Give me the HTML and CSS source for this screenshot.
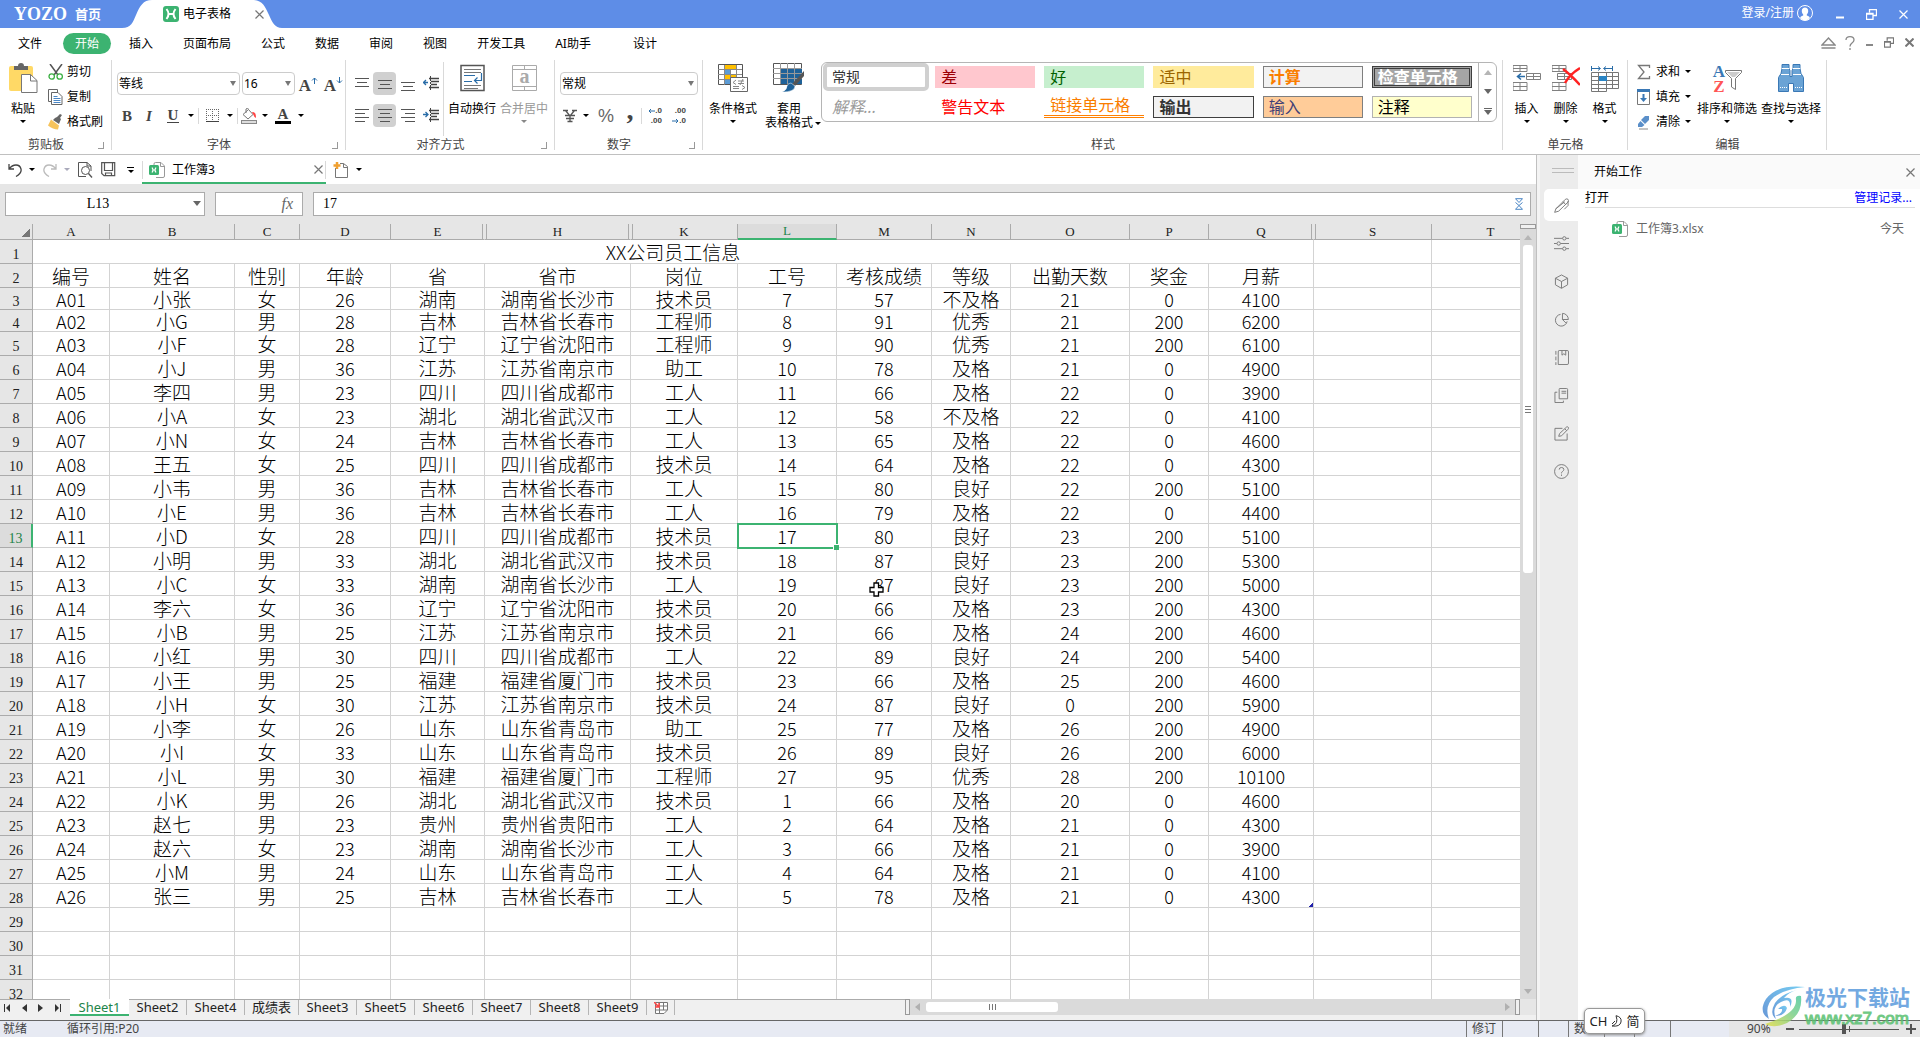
FILE: index.html
```html
<!DOCTYPE html>
<html lang="zh-CN">
<head>
<meta charset="utf-8">
<title>工作簿3 - 电子表格</title>
<link rel="stylesheet" href="styles.css">
</head>
<body>
<svg class="defs" aria-hidden="true">
  <symbol id="x" viewBox="0 0 9 9"><path d="M.5.5l8 8M8.5.5l-8 8" fill="none" stroke="currentColor" stroke-width="1.2"/></symbol>
  <symbol id="restore" viewBox="0 0 11 11"><path d="M3.500 3.500v-3h7v6h-3M.5 4.500h6.500v6H.5zM.5 5.200h6.500" fill="none" stroke="currentColor" stroke-width="1.300"/></symbol>
  <symbol id="book" viewBox="0 0 16 16"><path d="M5 3V2q0-1.500 1.500-1.500H12L15.500 4v10q0 1.500-1.500 1.500H7" fill="#fff" stroke="#999"/><path d="M11.500.5V4.500h4" fill="none" stroke="#999"/><rect y="3" width="10" height="10" rx="1.500" fill="#3cb371"/><path d="M3 5.500q2 2.500 0 5M7 5.500q-2 2.500 0 5M3.500 8h3" fill="none" stroke="#fff" stroke-width="1.200"/></symbol>
  <symbol id="grid5" viewBox="0 0 28 26"><path d="M0 .5h14v6H0zM0 3.500h14M7 .5v6M0 17.500h14v8H0zM0 21.500h14M7 17.500v8M13.500 8.500h14v6h-14zM13.500 11.500h14M20.500 8.500v6" fill="none" stroke="#808080"/></symbol>
</svg>

<header class="titlebar">
  <a class="brand" href="#"><b>YOZO</b><span>首页</span></a>
  <div class="apptab">
    <svg class="apptab-bg" width="160" height="28" viewBox="0 0 160 28"><path d="M0 28C9 28 11 22 14 15C18 6 21 0 30 0H130C140 0 143 6 147 15C150 22 153 28 160 28Z" fill="#fff"/></svg>
    <svg width="16" height="16" viewBox="0 0 16 16"><rect width="16" height="16" rx="3" fill="#3cb371"/><path d="M3.500 3Q7.500 8 3.500 13M12.500 3Q8.500 8 12.500 13M5.500 8h5" fill="none" stroke="#fff" stroke-width="2"/></svg>
    <span>电子表格</span>
    <button class="ib close" aria-label="关闭"><svg width="9" height="9"><use href="#x"/></svg></button>
  </div>
  <div class="account">
    <a href="#">登录/注册</a>
    <svg width="16" height="16" viewBox="0 0 16 16"><circle cx="8" cy="8" r="7.500" fill="none" stroke="#fff"/><path d="M8 2.500c2 0 3.200 1.400 3.200 3.500 0 1.500-.6 2.700-1.400 3.400v1.200c2 .6 2.700 1.200 3 2C11.500 14.500 10 15.500 8 15.500s-3.500-1-4.800-2.900c.3-.8 1-1.400 3-2V9.400C5.400 8.700 4.800 7.500 4.800 6 4.800 3.900 6 2.500 8 2.500z" fill="#fff"/></svg>
  </div>
  <div class="winbtns">
    <button class="ib" aria-label="最小化"><svg width="8" height="11"><path d="M0 8.500h8" stroke="#fff" stroke-width="2"/></svg></button>
    <button class="ib" aria-label="还原"><svg width="11" height="11"><use href="#restore"/></svg></button>
    <button class="ib" aria-label="关闭窗口"><svg width="9" height="9"><use href="#x"/></svg></button>
  </div>
</header>

<nav class="menu">
  <button class="first">文件</button><button class="on">开始</button><button>插入</button><button>页面布局</button><button>公式</button><button>数据</button><button>审阅</button><button>视图</button><button>开发工具</button><button class="ai">AI助手</button><button>设计</button>
  <div class="winbtns sub">
    <button class="ib" aria-label="折叠功能区"><svg width="15" height="12" viewBox="0 0 15 12"><path d="M1 8L7.500 1 14 8zM.5 11h14" fill="none" stroke="#888" stroke-width="1.400"/></svg></button>
    <button class="ib q" aria-label="帮助"><svg width="10" height="14" viewBox="0 0 10 14"><path d="M1 4Q1 .7 5 .7T9 4Q9 5.500 7 7T5 10.500M5 12v2" fill="none" stroke="#888" stroke-width="1.300"/></svg></button>
    <button class="ib" aria-label="最小化文档"><svg width="7" height="11"><path d="M0 8h7" stroke="#888" stroke-width="2"/></svg></button>
    <button class="ib" aria-label="还原文档"><svg width="10" height="11"><use href="#restore"/></svg></button>
    <button class="ib" aria-label="关闭文档"><svg width="9" height="9" viewBox="0 0 9 9"><path d="M.5.5l8 8M8.500.5l-8 8" stroke="#777" stroke-width="2"/></svg></button>
  </div>
</nav>

<section class="ribbon">
  <div class="group g1">
    <div class="body">
      <button class="big w46"><svg width="30" height="30" viewBox="0 0 30 30"><rect x="1" y="3" width="24" height="25" rx="2" fill="#ffd966"/><path d="M6 3h4q0-3 3-3t3 3h4v4H6z" fill="#666"/><path d="M13.500 11.500h9l6.500 6v12H13.500z" fill="#fff" stroke="#777"/><path d="M22.500 11.500v6.500H29" fill="none" stroke="#777"/></svg><span>粘贴</span><i class="arr"></i></button>
      <div class="stack">
        <button><svg width="16" height="16" viewBox="0 0 16 16"><path d="M2 0l8 11M14 0L6 11" stroke="#555" stroke-width="1.500" fill="none"/><circle cx="3.700" cy="12.500" r="2.700" fill="none" stroke="#3cb043" stroke-width="1.300"/><circle cx="11.700" cy="12.500" r="2.700" fill="none" stroke="#3cb043" stroke-width="1.300"/></svg>剪切</button>
        <button><svg width="16" height="16" viewBox="0 0 16 16"><path d="M3 12.500H.5v-12h9V3" fill="none" stroke="#666"/><path d="M3.500 3.500H10l4 4v8H3.500z" fill="#fff" stroke="#666"/><path d="M5.500 7.500h4M5.500 9.500h7M5.500 11.500h7M5.500 13.500h7" stroke="#4a86c5"/></svg>复制</button>
        <button><svg width="16" height="16" viewBox="0 0 16 16"><path d="M7 4l2-1 3-3 2 1-2 3 1 1-2 5-6-4z" fill="#666"/><path d="M3 5.500l8 6-1 4q-5 0-10-4z" fill="#f6c35b"/></svg>格式刷</button>
      </div>
    </div>
    <div class="cap"><span>剪贴板</span><button class="lch" aria-label="剪贴板设置"></button></div>
  </div>

  <div class="group g2">
    <div class="body rows">
      <div class="row">
        <label class="sel w123"><select aria-label="字体"><option>等线</option></select></label>
        <label class="sel w53"><select aria-label="字号"><option>16</option></select></label>
        <button class="t w23" aria-label="增大字号"><b class="serif a">A</b><svg width="7" height="7" viewBox="0 0 7 7"><path d="M3.500 7V1M1 3.500L3.500 1 6 3.500" fill="none" stroke="#2a6da8"/></svg></button>
        <button class="t w23" aria-label="减小字号"><b class="serif a">A</b><svg width="7" height="7" viewBox="0 0 7 7"><path d="M3.500 0v6M1 3.500L3.500 6 6 3.500" fill="none" stroke="#2a6da8"/></svg></button>
      </div>
      <div class="row r2">
        <button class="t w20 serif"><b>B</b></button><button class="t w24 serif"><b><em>I</em></b></button><button class="t w24 serif"><b class="u">U</b></button><button class="t w12"><i class="arr"></i></button>
        <i class="vs"></i>
        <button class="t w24"><svg width="13" height="13" viewBox="0 0 13 13"><path d="M.5 0v12M6.500 0v12M12.500 0v12M0 .5h13M0 6.500h13" stroke="#666" stroke-dasharray="1 1" fill="none"/><path d="M0 12.500h13" stroke="#444"/></svg></button><button class="t w12"><i class="arr"></i></button>
        <i class="vs"></i>
        <button class="t w20"><svg width="17" height="16" viewBox="0 0 17 16"><path d="M2 6.500L7.500 1.500 12 6.500 7 11zM5 5V1q2-2 2.500.5" fill="#fff" stroke="#777"/><path d="M11 4q4-1 4 6-2-1-3-4z" fill="#f44"/><rect x=".5" y="12.500" width="15" height="3" fill="#ddd" stroke="#888"/></svg></button><button class="t w12"><i class="arr"></i></button>
        <button class="t w24 serif"><b class="fc">A</b></button><button class="t w12"><i class="arr"></i></button>
      </div>
    </div>
    <div class="cap"><span>字体</span><button class="lch" aria-label="字体设置"></button></div>
  </div>

  <div class="group g3">
    <div class="body">
      <div class="rows al">
        <div class="row">
          <button class="t w23"><svg width="14" height="14"><path d="M0 1.500h14M2 5.500h10M0 9.500h14" class="ln"/></svg></button><button class="t w23 act"><svg width="14" height="14"><path d="M0 3.500h14M2 7.500h10M0 11.500h14" class="ln"/></svg></button><button class="t w23"><svg width="14" height="14"><path d="M0 5.500h14M2 9.500h10M0 13.500h14" class="ln"/></svg></button><button class="t w23"><svg width="16" height="15" viewBox="0 0 16 15"><path d="M5 6.500H.5M3 4L.5 6.500 3 9" stroke="#2a6da8" fill="none" stroke-width="1.300"/><path d="M6 2.500h10M8 5.500h8M8 8.500h6M6 11.500h10" stroke="#444" fill="none" stroke-width="1.400"/><path d="M7.500 0v15" stroke="#444" stroke-dasharray="2 1"/></svg></button>
        </div>
        <div class="row r2">
          <button class="t w23"><svg width="14" height="14"><path d="M0 .5h14M0 4.500h10M0 8.500h14M0 12.500h10" class="ln"/></svg></button><button class="t w23 act"><svg width="14" height="14"><path d="M0 .5h14M2 4.500h10M0 8.500h14M2 12.500h10" class="ln"/></svg></button><button class="t w23"><svg width="14" height="14"><path d="M0 .5h14M4 4.500h10M0 8.500h14M4 12.500h10" class="ln"/></svg></button><button class="t w23"><svg width="16" height="15" viewBox="0 0 16 15"><path d="M0 6.500H4.500M2.500 4L5 6.500 2.500 9" stroke="#2a6da8" fill="none" stroke-width="1.300"/><path d="M6 2.500h10M8 5.500h8M8 8.500h6M6 11.500h10" stroke="#444" fill="none" stroke-width="1.400"/><path d="M7.500 0v15" stroke="#444" stroke-dasharray="2 1"/></svg></button>
        </div>
      </div>
      <i class="vs tall"></i>
      <button class="big w50"><svg width="25" height="30" viewBox="0 0 25 30"><path d="M1 2.500h23v25H1z" fill="#fff" stroke="#555" stroke-width="1.500"/><path d="M4 6.500h17M4 9.500h17M4 22.500h17M4 25.500h14" stroke="#777"/><path d="M4 12.500h11M4 18.500h8M21.500 10v7.500H15M17.500 14.500l-3 3 3 3" stroke="#2a6da8" fill="none" stroke-width="1.200"/></svg><span>自动换行</span></button>
      <button class="big w54 dis" disabled><svg width="25" height="30" viewBox="0 0 25 30"><path d="M.5 2.500h24v25H.5zM.5 6.500h24M.5 23.500h24M12.500 2v4M12.500 24v4" fill="none" stroke="#aaa"/><text x="12.500" y="20" text-anchor="middle" class="svga">a</text></svg><span>合并居中</span><i class="arr"></i></button>
    </div>
    <div class="cap"><span>对齐方式</span><button class="lch" aria-label="对齐设置"></button></div>
  </div>

  <div class="group g4">
    <div class="body rows">
      <div class="row"><label class="sel w138"><select aria-label="数字格式"><option>常规</option></select></label></div>
      <div class="row r2">
        <button class="t w20" aria-label="货币"><svg width="14" height="14" viewBox="0 0 14 14"><path d="M0 1.500h5M9 1.500h5M2.500 1.500L7 7l4.500-5.500M2 6.500h10M3 9.500h8M7 6.500v6M4.500 12.500h5" fill="none" stroke="#555" stroke-width="1.300"/></svg></button><button class="t w12"><i class="arr"></i></button>
        <button class="t w28 pct">%</button><button class="t w20 serif com"><b>,</b></button>
        <i class="vs"></i>
        <button class="t w24" aria-label="增加小数位"><span class="dec"><span><svg width="7" height="6"><path d="M7 3H1M3 1L1 3l2 2" stroke="#2a6da8" fill="none"/></svg>.0</span><span>.00</span></span></button><button class="t w24" aria-label="减少小数位"><span class="dec"><span>.00</span><span><svg width="7" height="6"><path d="M0 3h6M4 1l2 2-2 2" stroke="#2a6da8" fill="none"/></svg>.0</span></span></button>
      </div>
    </div>
    <div class="cap"><span>数字</span><button class="lch" aria-label="数字设置"></button></div>
  </div>

  <div class="group g5">
    <div class="body">
      <button class="big w56"><svg width="30" height="30" viewBox="0 0 30 30"><path d="M.5 1.500h24v20H.5z" fill="#fff" stroke="#555"/><path d="M7 2h11v4H7zM7 11h11v5H7z" fill="#ffc000"/><path d="M7 7h5v4H7zM7 17h5v4H7z" fill="#5b9bd5"/><path d="M6.500 2v20M12.500 6v15M18.500 2v20M0 6.500h24M0 11.500h24M0 16.500h24" stroke="#888" fill="none"/><path d="M12.500 14.500h17v14h-17z" fill="#fff" stroke="#666"/><path d="M18 17l-3 2.500 3 2M20 18h6M20 20.500h6M25 16l-3 6M24 22.500l3 2-3 2M15 23.500h6M15 25.500h6" stroke="#888" fill="none"/></svg><span>条件格式</span><i class="arr"></i></button>
      <button class="big w56"><svg width="32" height="30" viewBox="0 0 32 30"><path d="M.5.500h28v21H.5z" fill="#fff" stroke="#555"/><path d="M8 6h21v15H8z" fill="#1f6299"/><path d="M7.500 0v21M14.500 0v21M21.500 0v21M0 5.500h29M0 10.500h29M0 15.500h29" stroke="#999" fill="none"/><path d="M31 8v5L22 23l-3-2z" fill="#555"/><path d="M18 20l4 3q0 6-13 6 5-2 5-6 1-3 4-3z" fill="#1f6299" stroke="#fff" stroke-width=".5"/></svg><span>套用</span><span class="l2">表格格式<i class="arr"></i></span></button>
      <div class="gallery">
        <div class="cells">
          <button class="c normal">常规</button><button class="c bad">差</button><button class="c good">好</button><button class="c mid">适中</button><button class="c calc">计算</button><button class="c check">检查单元格</button>
          <button class="c expl">解释...</button><button class="c warn">警告文本</button><button class="c link">链接单元格</button><button class="c outp">输出</button><button class="c inp">输入</button><button class="c note">注释</button>
        </div>
        <div class="gscroll"><button aria-label="上一行"><i class="tri up"></i></button><button aria-label="下一行"><i class="tri"></i></button><button aria-label="更多样式"><i class="bar"></i><i class="tri"></i></button></div>
      </div>
    </div>
    <div class="cap"><span>样式</span></div>
  </div>

  <div class="group g6">
    <div class="body">
      <button class="big w39"><svg width="28" height="30" viewBox="0 -2 28 30"><use href="#grid5" width="28" height="26"/><path d="M12 11.500H5M8 8.500l-3.500 3L8 14.500" fill="none" stroke="#2a6da8" stroke-width="1.500"/></svg><span>插入</span><i class="arr"></i></button>
      <button class="big w39"><svg width="28" height="30" viewBox="0 -2 28 30"><path d="M0 .5h14v6H0zM0 3.500h14M7 .5v6M0 17.500h14v8H0zM0 21.500h14M7 17.500v8M5.500 8.500h14v6h-14zM5.500 11.500h14M12.500 8.500v6" fill="none" stroke="#808080"/><path d="M11 4q8 6 17 16M28 3q-10 6-15 15" fill="none" stroke="#f22" stroke-width="2.500"/></svg><span>删除</span><i class="arr"></i></button>
      <button class="big w39"><svg width="28" height="30" viewBox="0 -2 28 30"><path d="M.5 7.500h27v16h-12v3H.5zM0 11.500h28M0 15.500h28M0 19.500h28M0 23.500h16M7.500 8v18M15.500 8v16M21.500 8v16" fill="none" stroke="#777"/><path d="M8 11h8v5H8z" fill="#2a85c5"/><path d="M.5 1v5M21.500 1v5M1 3.500h8M13 3.500h8M7 1.500l2.500 2L7 5.500M15 1.500l-2.500 2 2.500 2" fill="none" stroke="#2a6da8"/></svg><span>格式</span><i class="arr"></i></button>
    </div>
    <div class="cap"><span>单元格</span></div>
  </div>

  <div class="group g7">
    <div class="body">
      <div class="stack ed">
        <button><svg width="16" height="16" viewBox="0 0 16 16"><path d="M13.500 4V1.500H2.500L8 8l-5.500 6.500h11V12" fill="none" stroke="#777" stroke-width="1.300"/></svg>求和<i class="arr"></i></button>
        <button><svg width="16" height="16" viewBox="0 0 16 16"><path d="M1.500 1.500h12v14h-12z" fill="#fff" stroke="#777"/><path d="M1 0h13v3H1zM6.500 5h2v4h2.500L7.500 13 4 9h2.500z" fill="#3a78b5"/></svg>填充<i class="arr"></i></button>
        <button><svg width="16" height="16" viewBox="0 0 16 16"><path d="M9 2h4v4L9 10 5 6zM4.500 7l4 4-2.500 2H2V10z" fill="#5b8fc9"/><path d="M3 15h9" stroke="#888"/></svg>清除<i class="arr"></i></button>
      </div>
      <button class="big w64"><svg width="30" height="30" viewBox="0 0 30 30"><text x="7" y="14" text-anchor="middle" class="svgl bl">A</text><text x="7" y="29" text-anchor="middle" class="svgl rd">Z</text><path d="M13.500 7.500h16v2l-6 6v11l-4-2.500v-8.500l-6-6z" fill="#fff" stroke="#777"/><path d="M15 9h13l-5 5h-3z" fill="#ccc"/></svg><span>排序和筛选</span><i class="arr"></i></button>
      <button class="big w64"><svg width="26" height="30" viewBox="0 0 26 30"><path d="M4 1.500h7v4l1 2v6h2v-6l1-2v-4h7v4l1 5 2.500 4v14h-10v-8h-5v8H.5v-14l2.500-4 1-5z" fill="#6aa3d5" stroke="#3a78b5"/><path d="M4 5.500h7M15 5.500h7M3 11.500h8M15 11.500h8" stroke="#fff"/><path d="M2 24.500h7M17 24.500h7" stroke="#fff" stroke-dasharray="1 1"/></svg><span>查找与选择</span><i class="arr"></i></button>
    </div>
    <div class="cap"><span>编辑</span></div>
  </div>
</section>

<main class="work">
  <section class="doc">
    <div class="quick">
      <button class="ib" aria-label="撤销"><svg width="14" height="14" viewBox="0 0 14 14"><path d="M1 1v5h5M1 6q3-4 7-4t5 4-5 7.500" fill="none" stroke="#444" stroke-width="1.300"/></svg></button><i class="arr"></i>
      <button class="ib redo" aria-label="恢复"><svg width="14" height="14" viewBox="0 0 14 14"><path d="M13 1v5H8M13 6q-3-4-7-4T1 6t5 7.500" fill="none" stroke="#bbb" stroke-width="1.300"/></svg></button><i class="arr lt"></i>
      <button class="ib pv" aria-label="打印预览"><svg width="15" height="16" viewBox="0 0 15 16"><path d="M8 14.500H.5V.5H9L13 4v5M9 .5V4h4" fill="none" stroke="#555"/><circle cx="7.500" cy="8.500" r="4" fill="#fff" stroke="#555"/><path d="M10.500 11.500l3.500 4" stroke="#555" stroke-width="1.300"/></svg></button>
      <button class="ib sv" aria-label="保存"><svg width="15" height="15" viewBox="0 0 15 15"><path d="M.7.700h13v13H3L.7 11.500zM3.500 1v7.500h8V1M4.500 14v-3h6v3" fill="none" stroke="#555" stroke-width="1.200"/></svg></button>
      <button class="ib mr" aria-label="更多"><i class="bar k"></i><i class="arr"></i></button>
      <div class="dtab"><svg width="16" height="16"><use href="#book"/></svg><span>工作簿3</span><button class="ib" aria-label="关闭工作簿"><svg width="9" height="9"><use href="#x"/></svg></button></div>
      <button class="ib nw" aria-label="新建"><svg width="16" height="16" viewBox="0 0 16 16"><path d="M2.500 6v9.500h12v-11l-4-3H7M10.500 1.500v4h4" fill="none" stroke="#777"/><path d="M4 0v7M.5 3.500h7" stroke="#f0a030" stroke-width="2.500"/></svg></button><i class="arr"></i>
    </div>
    <div class="fbar">
      <label class="sel name"><input type="text" value="L13" aria-label="名称框"></label>
      <button class="fx" aria-label="插入函数"><em>fx</em></button>
      <div class="formula"><input type="text" value="17" aria-label="编辑栏"><button class="ib" aria-label="展开"><svg width="8" height="12" viewBox="0 0 8 12"><path d="M.5.7h7L4 4.500zM.5 11.300h7L4 7.500zM.5 4.500L4 7.500 7.500 4.500" fill="none" stroke="#4a86c5"/></svg></button></div>
    </div>
    <div class="sheetarea">
      <div class="gridbox">
        <table>
          <colgroup><col class="k33"><col class="k77"><col class="k125"><col class="k65"><col class="k91"><col class="k94"><col class="k146"><col class="k107"><col class="k99"><col class="k95"><col class="k79"><col class="k119"><col class="k79"><col class="k105"><col class="k118"><col class="k118"></colgroup>
          <thead><tr><th class="corner"><th>A<th>B<th>C<th>D<th class="gr">E<th class="gl gr">H<th class="gl">K<th class="cur">L<th>M<th>N<th>O<th>P<th class="gr">Q<th class="gl">S<th>T</thead>
          <tbody>
          <tr><th>1<td colspan="13">XX公司员工信息<td><td>
          <tr><th>2<td>编号<td>姓名<td>性别<td>年龄<td>省<td>省市<td>岗位<td>工号<td>考核成绩<td>等级<td>出勤天数<td>奖金<td>月薪<td><td>
          <tr class="lo"><th>3<td>A01<td>小张<td>女<td>26<td>湖南<td>湖南省长沙市<td>技术员<td>7<td>57<td>不及格<td>21<td>0<td>4100<td><td>
          <tr class="lo"><th>4<td>A02<td>小G<td>男<td>28<td>吉林<td>吉林省长春市<td>工程师<td>8<td>91<td>优秀<td>21<td>200<td>6200<td><td>
          <tr><th>5<td>A03<td>小F<td>女<td>28<td>辽宁<td>辽宁省沈阳市<td>工程师<td>9<td>90<td>优秀<td>21<td>200<td>6100<td><td>
          <tr><th>6<td>A04<td>小J<td>男<td>36<td>江苏<td>江苏省南京市<td>助工<td>10<td>78<td>及格<td>21<td>0<td>4900<td><td>
          <tr><th>7<td>A05<td>李四<td>男<td>23<td>四川<td>四川省成都市<td>工人<td>11<td>66<td>及格<td>22<td>0<td>3900<td><td>
          <tr><th>8<td>A06<td>小A<td>女<td>23<td>湖北<td>湖北省武汉市<td>工人<td>12<td>58<td>不及格<td>22<td>0<td>4100<td><td>
          <tr><th>9<td>A07<td>小N<td>女<td>24<td>吉林<td>吉林省长春市<td>工人<td>13<td>65<td>及格<td>22<td>0<td>4600<td><td>
          <tr><th>10<td>A08<td>王五<td>女<td>25<td>四川<td>四川省成都市<td>技术员<td>14<td>64<td>及格<td>22<td>0<td>4300<td><td>
          <tr><th>11<td>A09<td>小韦<td>男<td>36<td>吉林<td>吉林省长春市<td>工人<td>15<td>80<td>良好<td>22<td>200<td>5100<td><td>
          <tr><th>12<td>A10<td>小E<td>男<td>36<td>吉林<td>吉林省长春市<td>工人<td>16<td>79<td>及格<td>22<td>0<td>4400<td><td>
          <tr class="currow"><th>13<td>A11<td>小D<td>女<td>28<td>四川<td>四川省成都市<td>技术员<td class="active">17<td>80<td>良好<td>23<td>200<td>5100<td><td>
          <tr><th>14<td>A12<td>小明<td>男<td>33<td>湖北<td>湖北省武汉市<td>技术员<td>18<td>87<td>良好<td>23<td>200<td>5300<td><td>
          <tr><th>15<td>A13<td>小C<td>女<td>33<td>湖南<td>湖南省长沙市<td>工人<td>19<td class="hover">87<svg class="cursor" width="15" height="15" viewBox="0 0 15 15"><path d="M5 1h4.500v4.500H14V10H9.500v4H5v-4H1V5.500h4z" fill="#fff" stroke="#000" stroke-width="1.300"/></svg><td>良好<td>23<td>200<td>5000<td><td>
          <tr><th>16<td>A14<td>李六<td>女<td>36<td>辽宁<td>辽宁省沈阳市<td>技术员<td>20<td>66<td>及格<td>23<td>200<td>4300<td><td>
          <tr><th>17<td>A15<td>小B<td>男<td>25<td>江苏<td>江苏省南京市<td>技术员<td>21<td>66<td>及格<td>24<td>200<td>4600<td><td>
          <tr><th>18<td>A16<td>小红<td>男<td>30<td>四川<td>四川省成都市<td>工人<td>22<td>89<td>良好<td>24<td>200<td>5400<td><td>
          <tr><th>19<td>A17<td>小王<td>男<td>25<td>福建<td>福建省厦门市<td>技术员<td>23<td>66<td>及格<td>25<td>200<td>4600<td><td>
          <tr><th>20<td>A18<td>小H<td>女<td>30<td>江苏<td>江苏省南京市<td>技术员<td>24<td>87<td>良好<td>0<td>200<td>5900<td><td>
          <tr><th>21<td>A19<td>小李<td>女<td>26<td>山东<td>山东省青岛市<td>助工<td>25<td>77<td>及格<td>26<td>200<td>4900<td><td>
          <tr><th>22<td>A20<td>小I<td>女<td>33<td>山东<td>山东省青岛市<td>技术员<td>26<td>89<td>良好<td>26<td>200<td>6000<td><td>
          <tr><th>23<td>A21<td>小L<td>男<td>30<td>福建<td>福建省厦门市<td>工程师<td>27<td>95<td>优秀<td>28<td>200<td>10100<td><td>
          <tr><th>24<td>A22<td>小K<td>男<td>26<td>湖北<td>湖北省武汉市<td>技术员<td>1<td>66<td>及格<td>20<td>0<td>4600<td><td>
          <tr><th>25<td>A23<td>赵七<td>男<td>23<td>贵州<td>贵州省贵阳市<td>工人<td>2<td>64<td>及格<td>21<td>0<td>4300<td><td>
          <tr><th>26<td>A24<td>赵六<td>女<td>23<td>湖南<td>湖南省长沙市<td>工人<td>3<td>66<td>及格<td>21<td>0<td>3900<td><td>
          <tr><th>27<td>A25<td>小M<td>男<td>24<td>山东<td>山东省青岛市<td>工人<td>4<td>64<td>及格<td>21<td>0<td>4100<td><td>
          <tr><th>28<td>A26<td>张三<td>男<td>25<td>吉林<td>吉林省长春市<td>工人<td>5<td>78<td>及格<td>21<td>0<td class="tail">4300<td><td>
          <tr><th>29<td><td><td><td><td><td><td><td><td><td><td><td><td><td><td><td>
          <tr><th>30<td><td><td><td><td><td><td><td><td><td><td><td><td><td><td><td>
          <tr><th>31<td><td><td><td><td><td><td><td><td><td><td><td><td><td><td><td>
          <tr><th>32<td><td><td><td><td><td><td><td><td><td><td><td><td><td><td><td>
          </tbody>
        </table>
      </div>
      <div class="vscroll"><i class="split"></i><i class="tri up"></i><div class="thumb"><i></i><i></i><i></i></div><i class="space"></i><i class="tri lt"></i></div>
    </div>
    <div class="tabs">
      <div class="nav"><button aria-label="第一张"><svg width="7" height="8"><path d="M.5 0v8" stroke="#333"/><path d="M6 0v8L2 4z" fill="#333"/></svg></button><button aria-label="上一张"><svg width="5" height="8"><path d="M5 0v8L0 4z" fill="#333"/></svg></button><button aria-label="下一张"><svg width="5" height="8"><path d="M0 0v8l5-4z" fill="#333"/></svg></button><button aria-label="最后一张"><svg width="7" height="8"><path d="M6.500 0v8" stroke="#333"/><path d="M1 0v8l4-4z" fill="#333"/></svg></button></div>
      <div class="list"><button class="on">Sheet1</button><button>Sheet2</button><button>Sheet4</button><button>成绩表</button><button>Sheet3</button><button>Sheet5</button><button>Sheet6</button><button>Sheet7</button><button>Sheet8</button><button>Sheet9</button><button class="add" aria-label="新建工作表"><svg width="14" height="12" viewBox="0 0 14 12"><path d="M1.500.5h12V8L10 11.500H1.500zM2 4h11M2 8h11M5.500 0v11M9.500 0v8" fill="#fff" stroke="#777"/><path d="M0 0l4.500 4.500M5 1v4H1" stroke="#f44" stroke-width="1.500" fill="none"/></svg></button></div>
      <div class="hscroll"><i class="split"></i><i class="side l"></i><div class="hthumb"><i></i><i></i><i></i></div><i class="space"></i><i class="side r"></i><i class="split"></i><i class="end"></i></div>
    </div>
  </section>

  <aside class="dock">
    <div class="rail">
      <i class="grip"></i>
      <button class="on" aria-label="开始工作"><svg viewBox="0 0 16 16"><path d="M.7 15.300L2 11.500 12 1.500q1.800-1.200 3 0t0 2.800L5 14zM9.500 4l3 3M15 3v5l-4 4M2 11.500L11.500 4" fill="none" stroke="#777"/></svg></button>
      <button aria-label="属性"><svg viewBox="0 0 16 16"><path d="M0 2.500h9M13 2.500h3M0 8h3M7 8h9M0 13.500h9M13 13.500h3" stroke="#777"/><circle cx="11" cy="2.500" r="1.800" fill="none" stroke="#777"/><circle cx="5" cy="8" r="1.800" fill="none" stroke="#777"/><circle cx="11" cy="13.500" r="1.800" fill="none" stroke="#777"/></svg></button>
      <button aria-label="对象"><svg viewBox="0 0 16 16"><path d="M8 1l6.500 3.500v7L8 15.300 1.500 11.500v-7zM1.500 4.500L8 8l6.500-3.500M8 8v7" fill="none" stroke="#777"/></svg></button>
      <button aria-label="图表"><svg viewBox="0 0 16 16"><path d="M7 2.500A6.300 6.300 0 1 0 14 10M9 1.500V8h6.300A6.300 6.300 0 0 0 9 1.500zM9 8l4 4" fill="none" stroke="#777"/></svg></button>
      <button aria-label="书签"><svg viewBox="0 0 16 16"><path d="M5.500.5H14Q15.500.5 15.500 2v12q0 1.500-1.500 1.500H4.500V2Q4.500.5 5.500.5zM8.500.5v5l2-1.500 2 1.500v-5" fill="none" stroke="#777"/><path d="M2 1v15" stroke="#777" stroke-dasharray="4 2"/></svg></button>
      <button aria-label="剪贴板"><svg viewBox="0 0 16 16"><path d="M6 .500h7.500Q14.500.5 14.500 1.500v10H5.500v-10Q5.500.5 6 .5zM8 3.500h5M8 5.500h5M3.500 4.500H1v11h9V13.500" fill="none" stroke="#777"/></svg></button>
      <button aria-label="批注"><svg viewBox="0 0 16 16"><path d="M9 2.500H1v12.500h13V8M5 11l1-3 7.500-7q1.500-.5 2 .7.200 1-.6 1.800L8 10.500zM11.500 3l2 2" fill="none" stroke="#777"/></svg></button>
      <button aria-label="帮助"><svg viewBox="0 0 16 16"><circle cx="8" cy="8" r="7.400" fill="none" stroke="#777"/><path d="M5.500 6q0-2.300 2.500-2.300T10.500 6Q10.500 7 9.200 7.800T8 10M8 11.200v1.500" fill="none" stroke="#777"/></svg></button>
    </div>
    <div class="pane">
      <header><h2>开始工作</h2><button class="ib" aria-label="关闭窗格"><svg width="9" height="9"><use href="#x"/></svg></button></header>
      <div class="open"><span>打开</span><a href="#">管理记录...</a></div>
      <a class="recent" href="#"><svg width="16" height="16"><use href="#book"/></svg><span>工作簿3.xlsx</span><time>今天</time></a>
    </div>
  </aside>
</main>

<footer class="status">
  <span class="s1">就绪</span><span class="s2">循环引用:P20</span>
  <div class="cellsr"><span>修订</span><span></span><span class="n"></span><span>数字</span><span class="n"></span><span></span><span class="w"></span></div>
  <div class="zoom"><label for="z">90%</label><button class="ib" aria-label="缩小"><svg width="8" height="8"><path d="M0 4h8" stroke="#555" stroke-width="2"/></svg></button><input id="z" type="range" min="0" max="100" value="45"><button class="ib" aria-label="放大"><svg width="10" height="10"><path d="M0 5h10M5 0v10" stroke="#555" stroke-width="2"/></svg></button></div>
</footer>

<div class="ime"><span>CH</span><svg width="11" height="12" viewBox="0 0 11 12"><path d="M5 .7Q11 2 10 7t-9 4Q8 9 5 .7zM4 6L1 9" fill="none" stroke="#333"/></svg><span>简</span></div>

<div class="mark">
  <svg width="44" height="42" viewBox="0 0 44 42"><defs><linearGradient id="mb" x1="0" y1="1" x2="1" y2="0"><stop offset="0" stop-color="#4f86d0"/><stop offset="1" stop-color="#5fc4f0"/></linearGradient><linearGradient id="mg" x1="0" y1="1" x2="1" y2="0"><stop offset="0" stop-color="#e6e04a"/><stop offset=".6" stop-color="#79cf8a"/><stop offset="1" stop-color="#4fc9a0"/></linearGradient></defs>
  <path d="M44 1Q16-2 5 13Q-3 26 8 33Q3 20 13 11Q24 3 44 1z" fill="url(#mb)"/><path d="M36 4Q20 8 14 17Q8 28 15 33Q10 21 20 16Q30 11 29 21Q34 10 23 12Q28 6 36 4z" fill="url(#mb)"/><path d="M40 10Q34 9 35 14Q36 28 4 38Q13 43 26 37Q42 28 40 10z" fill="url(#mg)"/><path d="M17 23Q24 17 26 22Q24 30 14 30Q22 27 21 23z" fill="url(#mb)"/></svg>
  <div><b>极光下载站</b><i>www.xz7.com</i></div>
</div>
</body>
</html>
```
FILE: styles.css
```css
* { box-sizing: border-box; }
body {
  margin: 0; height: 100vh; overflow: hidden; display: flex; flex-direction: column;
  font: 12px/16px "Noto Sans", "Noto Sans CJK SC", sans-serif; color: #000; background: #fff;
}
button { border: 0; padding: 0; margin: 0; background: none; font: inherit; color: inherit; white-space: nowrap; }
input, select { font: inherit; color: inherit; }
a { text-decoration: none; color: inherit; }
svg { display: block; flex: none; }
i { font-style: normal; flex: none; }
.defs { position: absolute; width: 0; height: 0; }
.ib { display: flex; align-items: center; justify-content: center; flex: none; }
.serif { font-family: "Liberation Serif", serif; }
.arr { width: 6px; height: 3px; border: 3px solid transparent; border-top-color: #000; border-bottom: 0; }
.arr.lt { border-top-color: #aab; }
.tri { width: 8px; height: 5px; border: 4px solid transparent; border-top: 5px solid #666; border-bottom: 0; }
.tri.up { border-top: 0; border-bottom: 5px solid #b5b5b5; }
.tri.lt { border-top-color: #b0b0b0; }

/* title bar */
.titlebar { flex: none; height: 28px; background: #5e8de7; color: #fff; display: flex; }
.brand { width: 122px; padding-left: 14px; display: flex; align-items: center; gap: 8px; font-size: 13px; font-weight: bold; }
.brand b { font: bold 18px/28px "Liberation Serif", serif; }
.apptab { position: relative; width: 160px; display: flex; align-items: center; gap: 4px; padding: 0 18px 0 41px; color: #000; }
.apptab > * { position: relative; }
.apptab > .apptab-bg { position: absolute; left: 0; top: 0; }
.apptab .close { margin-left: auto; color: #777; }
.account { margin-left: auto; display: flex; align-items: center; gap: 3px; padding-bottom: 2px; }
.winbtns { display: flex; align-items: center; gap: 22px; padding: 0 12px 0 23px; }

/* menu */
.menu { flex: none; height: 30px; display: flex; align-items: center; padding: 1px 0 0 3px; }
.menu > button { padding: 0 15px; height: 21px; }
.menu > .first { margin-right: 6px; }
.menu > .on { padding: 0 12px; margin-right: 3px; background: #3cb371; color: #fff; border-radius: 11px; }
.menu > .ai { padding-right: 27px; }
.winbtns.sub { margin-left: auto; gap: 11px; padding: 0 6px 2px 0; color: #777; }
.winbtns.sub .q { margin-left: -2px; }

/* ribbon */
.ribbon { flex: none; height: 97px; display: flex; border-bottom: 1px solid #c0c0c0; }
.group { flex: none; display: flex; flex-direction: column; background: linear-gradient(#d9d9d9, #d9d9d9) right 2px / 1px 90px no-repeat; }
.g1 { width: 112px; } .g2 { width: 234px; } .g3 { width: 209px; } .g4 { width: 148px; }
.g5 { flex: 0 1 800px; } .g6 { width: 125px; } .g7 { width: 199px; }
.body { flex: 1; display: flex; align-items: flex-start; }
.g5 .body { padding-left: 2px; }
.g6 .body { padding-left: 4px; }
.cap { height: 18px; display: flex; align-items: center; color: #444; }
.cap span { flex: 1; text-align: center; }
.lch { width: 20px; height: 7px; background: linear-gradient(#999, #999) 6px 100% / 6px 1px no-repeat, linear-gradient(#999, #999) 11px 0 / 1px 7px no-repeat; }
.big { display: flex; flex-direction: column; align-items: center; padding-top: 5px; flex: none; }
.big > span { margin-top: 8px; line-height: 16px; }
.big > .arr { margin-top: 3px; }
.big > .l2 { display: flex; align-items: center; margin: -2px -8px 0 0; gap: 2px; }
.big.dis { color: #999; }
.dis .arr { border-top-color: #888; }
.w12 { width: 12px; } .w20 { width: 20px; } .w23 { width: 23px; } .w24 { width: 24px; } .w28 { width: 28px; }
.w39 { width: 39px; } .w46 { width: 46px; } .w50 { width: 50px; } .w53 { width: 53px; } .w54 { width: 54px; }
.w56 { width: 56px; } .w64 { width: 64px; } .w123 { width: 123px; } .w138 { width: 138px; }
.stack { padding: 1px 0 0 2px; display: flex; flex-direction: column; }
.stack button { height: 25px; display: flex; align-items: center; gap: 3px; }
.stack.ed { width: 67px; padding-left: 8px; }
.stack.ed button { gap: 4px; }
.stack .arr { margin-left: 1px; }
.rows { flex-direction: column; padding: 14px 0 0 5px; }
.rows.al { padding-left: 4px; }
.row { display: flex; align-items: center; height: 23px; gap: 2px; }
.row.r2 { margin-top: 9px; gap: 0; }
.al .row { gap: 0; }
.t { height: 23px; display: flex; align-items: center; justify-content: center; color: #444; }
.t.serif { font-size: 15px; }
.t .a { font-size: 17px; line-height: 20px; padding-top: 4px; }
.t .a + svg { align-self: flex-start; margin-top: 5px; }
.u { border-bottom: 1px solid #444; line-height: 14px; width: 12px; }
.fc { border-bottom: 3px solid #000; width: 16px; line-height: 14px; }
.t.pct { font: 18px/22px "Liberation Sans", sans-serif; color: #666; }
.t.com { font-size: 28px; line-height: 4px; padding-bottom: 12px; }
.act { background: #d0d0d0; border-radius: 4px; }
.ln { stroke: #555; fill: none; }
.vs { width: 1px; height: 16px; background: #d9d9d9; margin: 0 1px; }
.vs.tall { height: 74px; margin: 4px 3px 0 1px; }
.dec { display: flex; flex-direction: column; align-items: flex-end; font: bold 8px/10px "Liberation Sans", sans-serif; }
.dec span { display: flex; align-items: center; }
.sel { position: relative; height: 23px; display: block; flex: none; }
.sel::after { content: ""; position: absolute; right: 4px; top: 9px; border: 3px solid transparent; border-top: 5px solid #777; border-bottom: 0; }
.sel select { width: 100%; height: 100%; appearance: none; border: 1px solid #ccc; border-radius: 4px; background: #fff; padding: 0 0 0 1px; }
.svga { font: bold 20px "Liberation Serif", serif; fill: #aaa; }
.svgl { font: bold 17px "Liberation Serif", serif; }
.bl { fill: #3a78b5; } .rd { fill: #f55; }

/* style gallery */
.gallery { flex: 1; margin: 4px 6px 0 4px; height: 60px; display: flex; border: 1px solid #b5b5b5; border-radius: 6px; }
.cells { flex: 1; display: grid; grid-template-columns: repeat(6, 1fr); gap: 8px 9px; padding: 3px 6px 3px 4px; align-content: start; }
.c { height: 22px; text-align: left; padding: 0 0 0 6px; font-size: 16px; line-height: 22px; }
.normal { outline: 4px solid #d0d0d0; outline-offset: -1px; border-radius: 2px; font-size: 14px; color: #333; }
.bad { background: #ffc7ce; color: #9c0006; } .good { background: #c6efce; color: #006100; } .mid { background: #ffeb9c; color: #9c6500; }
.calc { background: #f2f2f2; border: 1px solid #7f7f7f; color: #fa7d00; font-weight: bold; padding-left: 5px; line-height: 20px; }
.check { background: #a5a5a5; border: 3px double #3f3f3f; color: #fff; font-weight: bold; padding-left: 3px; line-height: 16px; }
.expl { font-style: italic; color: #999; } .warn { color: #f00; }
.link { color: #fa7d00; border-bottom: 3px double #ff8001; line-height: 19px; }
.outp { background: #f2f2f2; border: 1px solid #3f3f3f; font-weight: bold; color: #333; padding-left: 5px; line-height: 20px; }
.inp { background: #ffcc99; border: 1px solid #7f7f7f; color: #3f3f76; padding-left: 5px; line-height: 20px; }
.note { background: #ffffcc; border: 1px solid #b2b2b2; padding-left: 5px; line-height: 20px; }
.gscroll { width: 18px; border-left: 1px solid #b5b5b5; display: flex; flex-direction: column; }
.gscroll button { flex: 1; display: flex; flex-direction: column; align-items: center; justify-content: center; gap: 1px; }
.bar { width: 8px; height: 1px; background: #666; }
.bar.k { background: #000; }

/* work area */
.work { flex: 1; min-height: 0; display: flex; }
.doc { flex: 1; min-width: 0; display: flex; flex-direction: column; background: #e6e6e6; }
.quick { flex: none; height: 29px; display: flex; align-items: center; background: #fff; padding-left: 8px; }
.quick > .arr { margin-left: 7px; }
.redo, .pv { margin-left: 8px; }
.sv { margin-left: 8px; }
.mr { flex-direction: column; gap: 2px; margin-left: 11px; }
.mr .bar { width: 7px; }
.dtab { width: 184px; height: 27px; margin-left: 8px; align-self: flex-end; display: flex; align-items: center; gap: 7px; padding: 0 3px 0 7px; border-bottom: 2px solid #3cb371; background: linear-gradient(#d9d9d9, #d9d9d9) left center / 1px 18px no-repeat, linear-gradient(#d9d9d9, #d9d9d9) right center / 1px 18px no-repeat; }
.dtab .ib { margin-left: auto; color: #777; }
.nw { margin-left: 7px; }
.fbar { flex: none; height: 40px; display: flex; padding: 8px 5px; gap: 10px; font: 14px "Liberation Serif", serif; }
.fbar .name { width: 200px; height: 24px; }
.name::after { border: 4px solid transparent; border-top: 5px solid #666; border-bottom: 0; }
.name input { width: 100%; height: 100%; border: 1px solid #ababab; background: #fff; text-align: center; padding: 0 14px 0 0; }
.fx { width: 88px; border: 1px solid #ababab; background: #fff; text-align: right; padding-right: 9px; font-size: 16px; color: #666; }
.formula { flex: 1; display: flex; border: 1px solid #ababab; background: #fff; padding-right: 7px; }
.formula input { flex: 1; border: 0; padding: 0 9px; background: none; }
.sheetarea { flex: 1; min-height: 0; display: flex; }
.gridbox { flex: 1; min-width: 0; overflow: hidden; }
table { width: 1550px; min-width: 100%; table-layout: fixed; border-collapse: separate; border-spacing: 0; background: #fff; }
.k33 { width: 33px; } .k77 { width: 77px; } .k125 { width: 125px; } .k65 { width: 65px; } .k91 { width: 91px; } .k94 { width: 94px; }
.k146 { width: 146px; } .k107 { width: 107px; } .k99 { width: 99px; } .k95 { width: 95px; } .k79 { width: 79px; } .k119 { width: 119px; }
.k105 { width: 105px; } .k118 { width: 118px; }
th { padding: 0; font: 13px/15px "Liberation Serif", serif; color: #222; background: #e6e6e6; border: 0 solid #ababab; border-width: 0 1px 1px 0; }
thead th { height: 16px; line-height: 14px; }
th.gr { border-right-color: #e6e6e6; background: linear-gradient(#ababab, #ababab) right 1px top / 1px 100% no-repeat #e6e6e6; }
th.gl { background: linear-gradient(#ababab, #ababab) 1px 0 / 1px 100% no-repeat #e6e6e6; }
th.gl.gr { background: linear-gradient(#ababab, #ababab) 1px 0 / 1px 100% no-repeat, linear-gradient(#ababab, #ababab) right 1px top / 1px 100% no-repeat #e6e6e6; }
.corner { background: linear-gradient(135deg, transparent 50%, #777 50%) right 2px bottom 2px / 9px 9px no-repeat #e6e6e6; }
th.cur { color: #1e8449; background: #dcdcdc; border-bottom: 2px solid #3cb371; }
tbody th { padding-top: 5px; font-size: 14px; }
.currow th { color: #1e8449; background: #dcdcdc; border-right: 2px solid #3cb371; }
td { height: 24px; padding: 0; border: 0 solid #d3d3d3; border-width: 0 1px 1px 0; text-align: center; font-size: 19px; line-height: 22px; font-weight: 300; font-family: "Noto Sans CJK SC", sans-serif; white-space: nowrap; }
.lo td { height: 22px; line-height: 20px; }
tr:nth-child(n+3) td:is(:nth-child(2), :nth-child(5), :nth-child(9), :nth-child(10), :nth-child(12), :nth-child(13), :nth-child(14)) { font-size: 18px; }
td.active { position: relative; outline: 2px solid #3cb371; outline-offset: -1px; }
.active::after { content: ""; position: absolute; right: -3px; bottom: -3px; width: 5px; height: 5px; background: #3cb371; border: 1px solid #fff; border-width: 1px 0 0 1px; box-sizing: content-box; }
.hover { position: relative; }
.cursor { position: absolute; left: 32px; top: 10px; }
td.tail { background: linear-gradient(135deg, transparent 50%, #22a 50%) right bottom / 4px 4px no-repeat; }
.vscroll { width: 16px; background: #dadada; display: flex; flex-direction: column; align-items: center; padding-bottom: 5px; }
.vscroll .split { align-self: stretch; height: 5px; border: 1px solid #999; background: #f0f0f0; }
.vscroll .up { margin: 6px 0 5px; }
.thumb { flex: 0 1 328px; width: 10px; background: #fff; border-radius: 3px; display: flex; flex-direction: column; align-items: center; justify-content: center; gap: 2px; }
.thumb i { width: 6px; height: 1px; background: #777; }
.space { flex: 1; }

/* sheet tabs */
.tabs { flex: none; height: 21px; display: flex; background: #f0f0f0; font-size: 13px; }
.nav { width: 70px; height: 16px; border-top: 1px solid #ababab; display: flex; align-items: center; justify-content: space-between; padding: 0 9px 0 4px; }
.list { flex: 1; display: flex; height: 16px; color: #222; border-top: 1px solid #ababab; }
.list button { width: 58px; line-height: 15px; border-right: 1px solid #b5b5b5; height: 15px; }
.list button:nth-child(4) { width: 54px; }
.list .on { width: 59px; color: #1e8449; background: #fff; border: 0; border-bottom: 2px solid #3cb371; height: 17px; margin-top: -1px; line-height: 16px; }
.list .add { width: 28px; display: flex; align-items: center; justify-content: center; }
.hscroll { width: 631px; height: 16px; background: #dadada; display: flex; align-items: center; }
.hscroll .split { width: 5px; height: 16px; border: 1px solid #999; background: #f0f0f0; }
.side { border: 4px solid transparent; margin: 0 5px; }
.side.l { border-right: 5px solid #b0b0b0; border-left: 0; margin-right: 6px; } .side.r { border-left: 5px solid #b0b0b0; border-right: 0; }
.hthumb { width: 132px; height: 10px; background: #fff; border-radius: 3px; display: flex; justify-content: center; align-items: center; gap: 2px; }
.hthumb i { width: 1px; height: 6px; background: #777; }
.end { width: 16px; height: 16px; background: #e6e6e6; }

/* right dock */
.dock { flex: none; width: 384px; display: flex; border-left: 1px solid #c0c0c0; }
.rail { width: 41px; background: #ececec; border-left: 3px solid #f4f4f4; display: flex; flex-direction: column; align-items: center; }
.grip { width: 22px; height: 5px; border: 1px solid #bbb; border-width: 1px 0; margin: 13px 0 16px 8px; }
.rail button { width: 34px; height: 32px; margin: 0 0 6px 4px; display: flex; align-items: center; justify-content: center; }
.rail svg { width: 15px; height: 15px; }
.rail .on { background: #fff; border-radius: 5px 0 0 5px; }
.pane { flex: 1; background: #fff; }
.pane header { height: 34px; display: flex; align-items: center; justify-content: space-between; padding: 0 5px 0 16px; background: #fafafa; color: #777; }
.pane h2 { margin: 0; font: inherit; color: #000; }
.open { margin: 0 5px 0 7px; height: 19px; display: flex; justify-content: space-between; align-items: center; padding-right: 3px; border-bottom: 1px solid #ddd; }
.open a { color: #00f; }
.recent { display: flex; align-items: center; gap: 8px; margin: 13px 16px 0 34px; color: #666; }
.recent time { margin-left: auto; }

/* status bar */
.status { flex: none; height: 17px; display: flex; align-items: center; border-top: 1px solid #666; background: #e7eaf3; color: #444; }
.s1 { width: 67px; padding-left: 3px; }
.cellsr { margin-left: auto; height: 16px; display: flex; }
.cellsr span { width: 36px; border-left: 1px solid #777; padding-left: 5px; }
.cellsr .n { width: 30px; } .cellsr .w { width: 59px; }
.zoom { width: 191px; height: 16px; background: #e6e6e6; display: flex; align-items: center; padding: 0 4px 0 18px; }
.zoom label { width: 39px; flex: none; }
.zoom input { flex: 1; min-width: 0; margin: 0 7px 0 5px; appearance: none; height: 12px; background: linear-gradient(#555, #555) center / 100% 1px no-repeat, linear-gradient(#555, #555) 50% 50% / 1px 6px no-repeat; }
.zoom input::-webkit-slider-thumb { appearance: none; width: 4px; height: 10px; background: #555; }

/* overlays */
.ime { position: absolute; right: 275px; bottom: 3px; width: 61px; height: 26px; display: flex; align-items: center; justify-content: center; gap: 4px; background: #fff; border: 1px solid #999; border-radius: 5px; box-shadow: 0 1px 3px #888; font-size: 13px; color: #222; }
.mark { position: absolute; right: 10px; bottom: 8px; height: 44px; display: flex; align-items: center; opacity: .85; }
.mark div { display: flex; flex-direction: column; }
.mark b { font-size: 21px; line-height: 24px; color: #5b9bdc; }
.mark i { font: 17px/20px "Liberation Sans", sans-serif; color: #58c070; -webkit-text-stroke: 1px #58c070; }
```
